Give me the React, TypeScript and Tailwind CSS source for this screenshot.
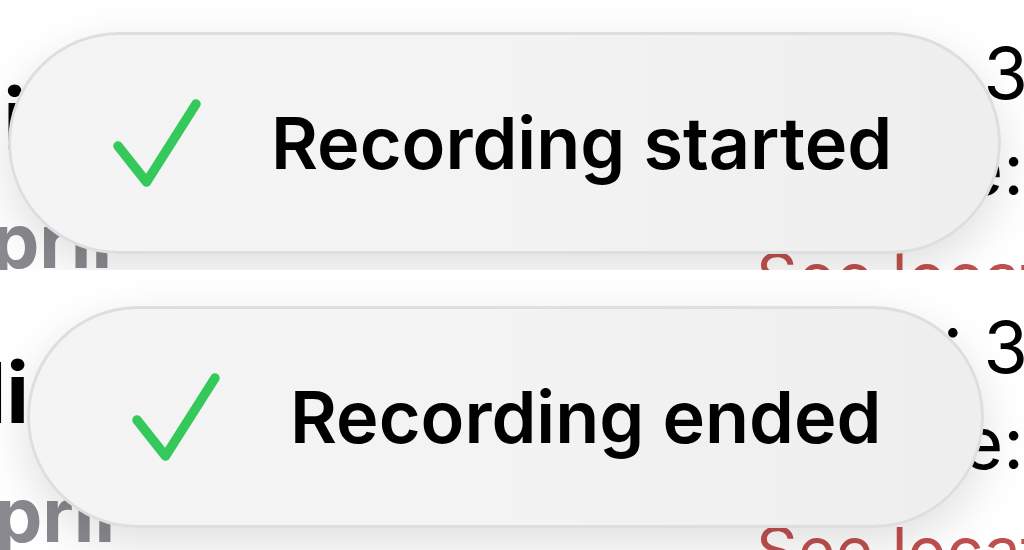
type ToastProps = { message: string; className: string };

function CheckIcon() {
  return (
    <svg viewBox="0 0 88 88" className="size-[88px] shrink-0" fill="none" aria-hidden="true">
      <path
        d="M5 47 L33.5 83 L83 5"
        stroke="#34c95a"
        strokeWidth="9.5"
        strokeLinecap="round"
        strokeLinejoin="round"
      />
    </svg>
  );
}

function Toast({ message, className }: ToastProps) {
  return (
    <div
      role="status"
      className={`relative flex h-[222px] items-center rounded-full border-3 border-[#dededf] bg-linear-to-r from-[#f4f4f4] via-[#f2f3f2] to-[#eeeeee] pl-[102px] shadow-[0_16px_48px_rgba(0,0,0,0.13)] ${className}`}
    >
      <CheckIcon />
      <p className="ml-[70px] text-[72px] leading-[84px] font-semibold whitespace-nowrap text-black">
        {message}
      </p>
    </div>
  );
}

function Backdrop({ className }: { className: string }) {
  return (
    <div
      className={`absolute inset-0 flex justify-between overflow-hidden whitespace-nowrap ${className}`}
      aria-hidden="true"
    >
      <div className="flex w-28 flex-col items-end pt-[69px]">
        <p className="pr-[86px] text-[84px] leading-[100px] font-bold text-black">li</p>
        <p className="mt-[23px] text-[76px] leading-[96px] font-bold text-[#8a898f]">pril</p>
      </div>
      <div className="flex w-[268px] flex-col pt-[25px] text-[72px] leading-[96px] text-black">
        <p className="-mr-1 text-right">: 3</p>
        <p className="text-right">e:</p>
        <p className="mt-3 text-[65px] text-[#c0504f]">See locat</p>
      </div>
    </div>
  );
}

export default function App() {
  return (
    <main className="bg-white font-['Inter',sans-serif]">
      <section className="relative h-[270px] overflow-hidden pt-8">
        <Backdrop className="pt-0" />
        <Toast message="Recording started" className="mr-[23px] ml-2" />
      </section>
      <section className="relative h-[280px] overflow-hidden pt-9">
        <Backdrop className="pt-1 pl-[3px]" />
        <Toast message="Recording ended" className="mr-10 ml-[27px]" />
      </section>
    </main>
  );
}
